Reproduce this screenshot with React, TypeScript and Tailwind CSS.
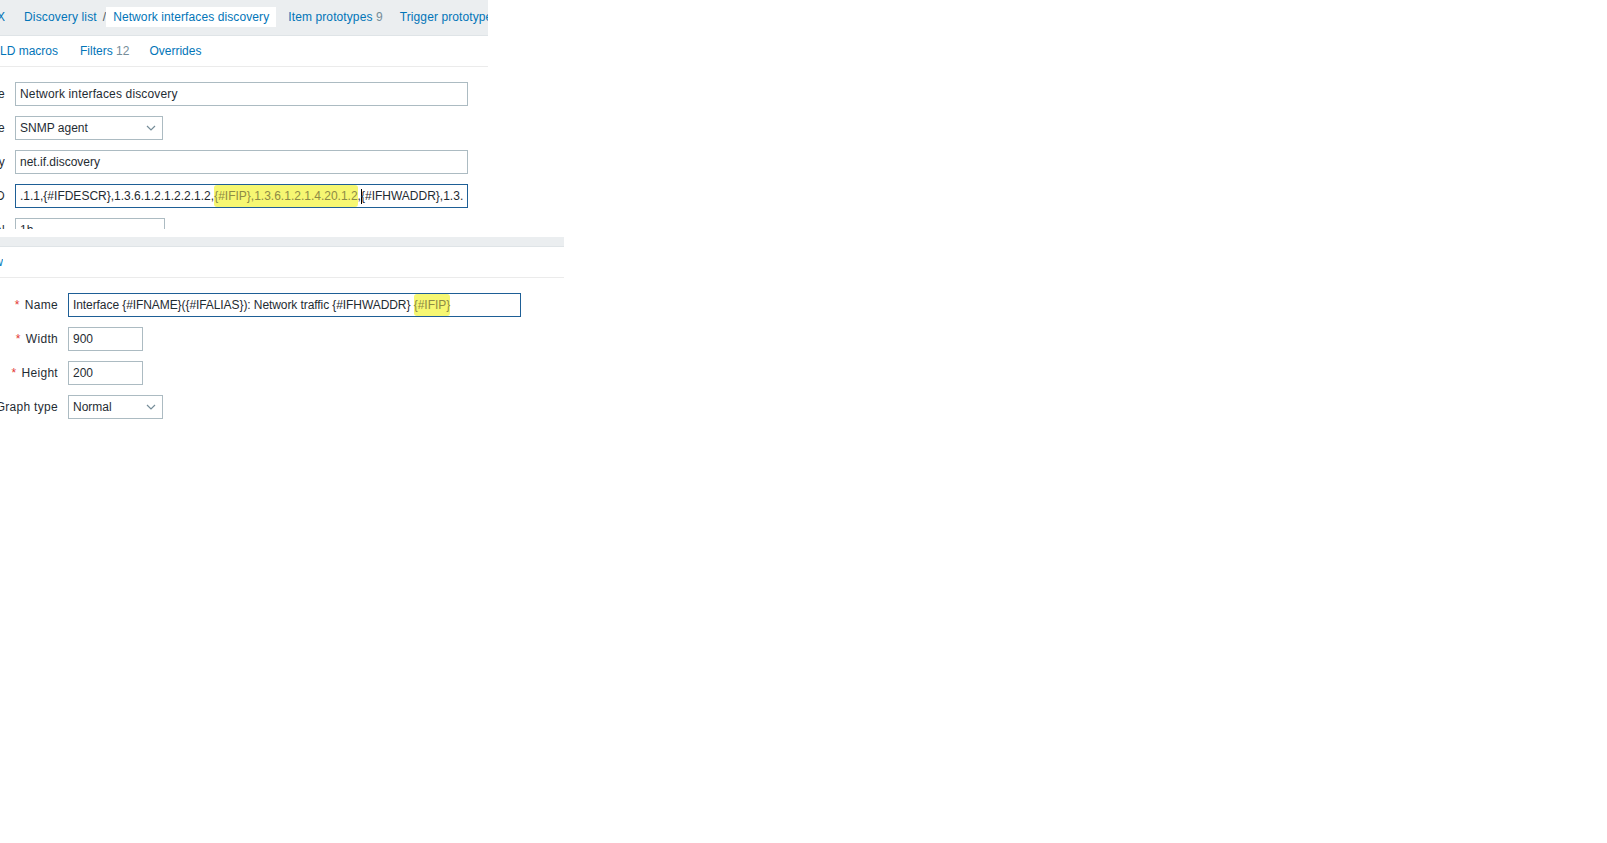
import type { ReactNode } from "react";

const TEXT = "text-[#1f2c33]";
const LINK = "text-[#0275b8]";

// label cell: right-aligned, the start overflows and is cut off on the left
function Label({ width, children }: { width: string; children: ReactNode }) {
  return (
    <div className={`${width} flex shrink-0 justify-end overflow-hidden whitespace-nowrap`}>
      <span className={`${TEXT} tracking-[0.3px]`}>{children}</span>
    </div>
  );
}

function Required({ children }: { children: ReactNode }) {
  return (
    <>
      <span className="mr-[5px] text-[#e33734]">*</span>
      {children}
    </>
  );
}

function Field({
  width,
  focused,
  children,
}: {
  width: string;
  focused?: boolean;
  children: ReactNode;
}) {
  return (
    <div
      className={`${width} flex h-[24px] shrink-0 items-center border bg-white px-[4px] ${TEXT} ${
        focused ? "border-[#1e5f96]" : "border-[#acbbc2]"
      }`}
    >
      <div className="flex min-w-0 flex-1 items-center overflow-hidden whitespace-nowrap">
        {children}
      </div>
    </div>
  );
}

function Select({ width, value }: { width: string; value: string }) {
  return (
    <div
      className={`${width} flex h-[24px] shrink-0 items-center justify-between border border-[#acbbc2] bg-white pl-[4px] pr-[6px] ${TEXT}`}
    >
      <span>{value}</span>
      <svg width="10" height="6" viewBox="0 0 10 6" className="text-[#768d99]">
        <polyline points="1,1 5,5 9,1" fill="none" stroke="currentColor" strokeWidth="1.2" />
      </svg>
    </div>
  );
}

function Mark({ children }: { children: ReactNode }) {
  return (
    <span className="rounded-[3px] bg-[#f6f772] py-[2px] text-[#8d8b45]">{children}</span>
  );
}

// text cursor, drawn without taking up room on the line
function Caret() {
  return <span className="-mr-px inline-block h-[15px] w-0 border-l border-black" />;
}

function Row({ children }: { children: ReactNode }) {
  return <div className="flex items-center gap-[10px]">{children}</div>;
}

export default function App() {
  return (
    <div className="h-[843px] w-full overflow-hidden bg-white font-['Liberation_Sans',Arial,sans-serif] text-[12px]">
      {/* discovery rule form */}
      <div className="w-[488px]">
        <div className="flex h-[36px] items-center overflow-hidden whitespace-nowrap border-b border-[#dfe4e7] bg-[#ebeef0] pb-px">
          <div className="flex w-[5px] shrink-0 justify-end overflow-hidden">
            <span className={LINK}>X</span>
          </div>
          <span className={`ml-[19px] tracking-[0.15px] ${LINK}`}>Discovery list</span>
          <span className="ml-[6px] text-[#4f5b61]">/</span>
          <span
            className={`flex h-[20px] items-center bg-white px-[7px] tracking-[0.1px] ${LINK}`}
          >
            Network interfaces discovery
          </span>
          <span className={`ml-[12px] tracking-[0.1px] ${LINK}`}>
            Item prototypes <span className="text-[#768d99]">9</span>
          </span>
          <span className={`ml-[17px] tracking-[0.1px] ${LINK}`}>Trigger prototypes</span>
        </div>

        <div className="flex h-[31px] items-center whitespace-nowrap border-b border-[#ebebeb]">
          <span className={LINK}>LD macros</span>
          <span className={`ml-[22px] ${LINK}`}>
            Filters <span className="text-[#768d99]">12</span>
          </span>
          <span className={`ml-[20px] ${LINK}`}>Overrides</span>
        </div>

        <div className="flex h-[162px] flex-col gap-[10px] overflow-hidden pt-[15px]">
          <Row>
            <Label width="w-[5px]">Name</Label>
            <Field width="w-[453px]">
              <span className="tracking-[0.15px]">Network interfaces discovery</span>
            </Field>
          </Row>
          <Row>
            <Label width="w-[5px]">Type</Label>
            <Select width="w-[148px]" value="SNMP agent" />
          </Row>
          <Row>
            <Label width="w-[5px]">Key</Label>
            <Field width="w-[453px]">net.if.discovery</Field>
          </Row>
          <Row>
            <Label width="w-[5px]">SNMP OID</Label>
            <Field width="w-[453px]" focused>
              <span>.1.1,{"{#IFDESCR}"},1.3.6.1.2.1.2.2.1.2,</span>
              <Mark>{"{#IFIP}"},1.3.6.1.2.1.4.20.1.2</Mark>
              <span>,</span>
              <Caret />
              <span>{"{#IFHWADDR}"},1.3.</span>
            </Field>
          </Row>
          <Row>
            <Label width="w-[5px]">Update interval</Label>
            <Field width="w-[150px]">1h</Field>
          </Row>
        </div>
      </div>

      {/* graph prototype form */}
      <div className="mt-[8px] w-[564px]">
        <div className="h-[10px] border-b border-[#dfe4e7] bg-[#ebeef0]" />
        <div className="flex h-[31px] items-center border-b border-[#ebebeb]">
          <div className="flex w-[3px] justify-end overflow-hidden">
            <span className={LINK}>Preview</span>
          </div>
        </div>

        <div className="flex flex-col gap-[10px] pt-[15px]">
          <Row>
            <Label width="w-[58px]">
              <Required>Name</Required>
            </Label>
            <Field width="w-[453px]" focused>
              <span className="tracking-[-0.08px]">
                Interface {"{#IFNAME}"}({"{#IFALIAS}"}): Network traffic {"{#IFHWADDR}"}&nbsp;
              </span>
              <Mark>{"{#IFIP}"}</Mark>
            </Field>
          </Row>
          <Row>
            <Label width="w-[58px]">
              <Required>Width</Required>
            </Label>
            <Field width="w-[75px]">900</Field>
          </Row>
          <Row>
            <Label width="w-[58px]">
              <Required>Height</Required>
            </Label>
            <Field width="w-[75px]">200</Field>
          </Row>
          <Row>
            <Label width="w-[58px]">Graph type</Label>
            <Select width="w-[95px]" value="Normal" />
          </Row>
        </div>
      </div>
    </div>
  );
}
